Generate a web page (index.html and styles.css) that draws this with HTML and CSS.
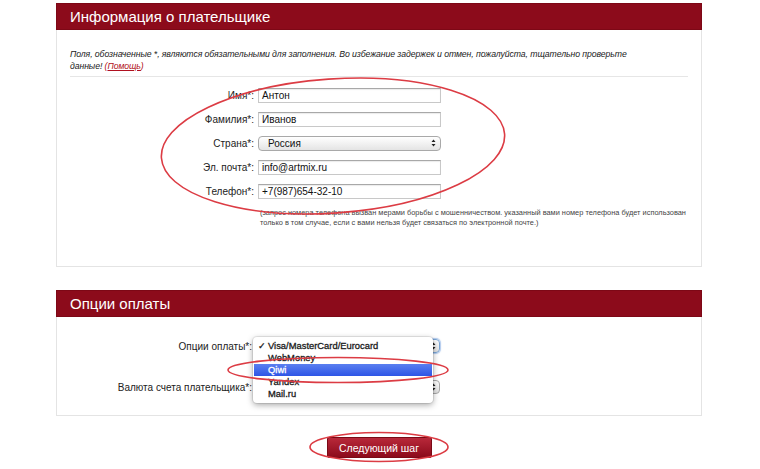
FILE: index.html
```html
<!DOCTYPE html>
<html lang="ru">
<head>
<meta charset="utf-8">
<link rel="stylesheet" href="styles.css">
</head>
<body>
<div class="page">
  <section class="panel">
    <h2 class="panel-head">Информация о плательщике</h2>
    <div class="panel-body info-body">
      <p class="note">Поля, обозначенные *, являются обязательными для заполнения. Во избежание задержек и отмен, пожалуйста, тщательно проверьте<br>данные! <span class="help">(<a href="#">Помощь</a>)</span></p>
      <hr class="rule">
      <div class="form">
        <div class="row"><label class="lbl">Имя*:</label><div class="input">Антон</div></div>
        <div class="row"><label class="lbl">Фамилия*:</label><div class="input">Иванов</div></div>
        <div class="row"><label class="lbl">Страна*:</label><div class="select">Россия<svg class="arrows" width="5" height="8" viewBox="0 0 5 8"><path d="M2.5 0.5 L4.5 3 L0.5 3 Z M2.5 7.5 L4.5 5 L0.5 5 Z"/></svg></div></div>
        <div class="row"><label class="lbl">Эл. почта*:</label><div class="input">info@artmix.ru</div></div>
        <div class="row"><label class="lbl">Телефон*:</label><div class="input">+7(987)654-32-10</div></div>
      </div>
      <p class="phone-note">(запрос номера телефона вызван мерами борьбы с мошенничеством. указанный вами номер телефона будет использован<br>только в том случае, если с вами нельзя будет связаться по электронной почте.)</p>
    </div>
  </section>

  <section class="panel pay">
    <h2 class="panel-head">Опции оплаты</h2>
    <div class="panel-body pay-body">
      <div class="row prow">
        <label class="lbl plbl">Опции оплаты*:</label>
        <div class="pselect focused"><svg class="arrows" width="5" height="8" viewBox="0 0 5 8"><path d="M2.5 0.5 L4.5 3 L0.5 3 Z M2.5 7.5 L4.5 5 L0.5 5 Z"/></svg>
          <ul class="menu">
            <li><span class="check">✓</span>Visa/MasterCard/Eurocard</li>
            <li>WebMoney</li>
            <li class="hl">Qiwi</li>
            <li>Yandex</li>
            <li>Mail.ru</li>
          </ul>
        </div>
      </div>
      <div class="row prow">
        <label class="lbl plbl">Валюта счета плательщика*:</label>
        <div class="pselect"><svg class="arrows" width="5" height="8" viewBox="0 0 5 8"><path d="M2.5 0.5 L4.5 3 L0.5 3 Z M2.5 7.5 L4.5 5 L0.5 5 Z"/></svg></div>
      </div>
    </div>
  </section>

  <div class="actions"><button class="next">Следующий шаг</button></div>

  <svg class="marks" width="760" height="469" viewBox="0 0 760 469">
    <ellipse cx="333" cy="146" rx="172" ry="67" transform="rotate(-4 333 146)"/>
    <ellipse cx="338" cy="370" rx="110" ry="12.5"/>
    <ellipse cx="379" cy="447" rx="69" ry="14.5"/>
  </svg>
</div>
</body>
</html>
```

FILE: styles.css
```css
* { box-sizing: border-box; }
html, body { margin: 0; padding: 0; background: #fff; }
body { font-family: "Liberation Sans", Arial, sans-serif; color: #222; }

.page {
  position: relative;
  width: 760px;
  height: 469px;
  padding: 3px 58px 0 56px;
  overflow: hidden;
}

.panel-head {
  margin: 0;
  height: 27px;
  background: #8c0b1b;
  border: 1px solid #7d0816;
  color: #fff;
  font-weight: normal;
  font-size: 15px;
  line-height: 25px;
  padding-left: 13px;
}

.panel-body {
  border: 1px solid #e4e4e4;
  border-top: none;
}

.info-body {
  height: 237px;
  padding: 18px 13px 0 13px;
}

.note {
  margin: 0;
  font-size: 8.7px;
  letter-spacing: -0.08px;
  line-height: 12px;
  font-style: italic;
  color: #222;
  white-space: nowrap;
}
.help { color: #b01020; }
.help a { color: #b01020; }

.rule {
  margin: 4px 0 0 0;
  border: none;
  border-top: 1px solid #e6e6e6;
  height: 0;
}

.form {
  margin-top: 11px;
  display: flex;
  flex-direction: column;
  gap: 9px;
}

.row {
  display: flex;
  align-items: center;
  gap: 4px;
}

.lbl {
  width: 184px;
  text-align: right;
  font-size: 10px;
  color: #222;
}

.input {
  width: 183px;
  height: 15px;
  border: 1px solid #c8c8c8;
  border-top-color: #a8a8a8;
  box-shadow: inset 0 1px 1px rgba(0,0,0,0.08);
  font-size: 10px;
  line-height: 13px;
  padding-left: 3px;
  color: #111;
}

.select {
  position: relative;
  width: 183px;
  height: 15px;
  border: 1px solid #a9a9a9;
  border-radius: 4px;
  background: linear-gradient(#ffffff, #e4e4e4);
  font-size: 10px;
  line-height: 13px;
  padding-left: 9px;
  color: #111;
}

.arrows {
  position: absolute;
  right: 4px;
  top: 2px;
  fill: #222;
}

.phone-note {
  margin: 9px 0 0 190px;
  font-size: 7.4px;
  line-height: 10px;
  color: #444;
  white-space: nowrap;
}

.pay { margin-top: 23px; }

.pay-body {
  height: 99px;
  padding: 22px 13px 0 13px;
  display: flex;
  flex-direction: column;
  gap: 27px;
}

.plbl { width: 182px; }

.pselect {
  position: relative;
  width: 184px;
  height: 14px;
  border: 1px solid #a9a9a9;
  border-radius: 4px;
  background: linear-gradient(#ffffff, #e0e0e0);
}
.pselect .arrows { top: 2px; right: 3px; }
.pselect.focused { border-color: #7aa6d6; box-shadow: 0 0 1px 1px rgba(100,150,220,0.5); }

.menu {
  position: absolute;
  left: -4px;
  top: -3px;
  width: 180px;
  margin: 0;
  padding: 3px 0;
  list-style: none;
  background: #fff;
  border-radius: 4px;
  box-shadow: 0 2px 6px rgba(0,0,0,0.35), 0 0 0 1px rgba(0,0,0,0.08);
  z-index: 2;
}
.menu li {
  position: relative;
  height: 12px;
  line-height: 12px;
  font-size: 9.4px;
  font-weight: normal;
  -webkit-text-stroke: 0.3px #1a1a1a;
  color: #1a1a1a;
  padding-left: 15px;
}
.menu li.hl {
  background: linear-gradient(#5a7ff0, #2e55e6);
  color: #fff;
  -webkit-text-stroke: 0.3px #fff;
  margin: 0 1px;
  padding-left: 14px;
}
.check {
  position: absolute;
  left: 5px;
  top: 0;
  font-size: 9px;
}

.actions {
  display: flex;
  justify-content: center;
  margin-top: 21px;
}

.next {
  width: 105px;
  height: 21px;
  border: 1px solid #7a0a16;
  border-radius: 2px;
  background: linear-gradient(#b8283a, #8c0b1b);
  color: #fff;
  font-family: "Liberation Sans", Arial, sans-serif;
  font-size: 10.5px;
  padding: 0;
}

.marks {
  position: absolute;
  left: 0;
  top: 0;
  pointer-events: none;
  z-index: 5;
}
.marks ellipse {
  fill: none;
  stroke: #dc3c44;
  stroke-width: 1.6;
}
```
